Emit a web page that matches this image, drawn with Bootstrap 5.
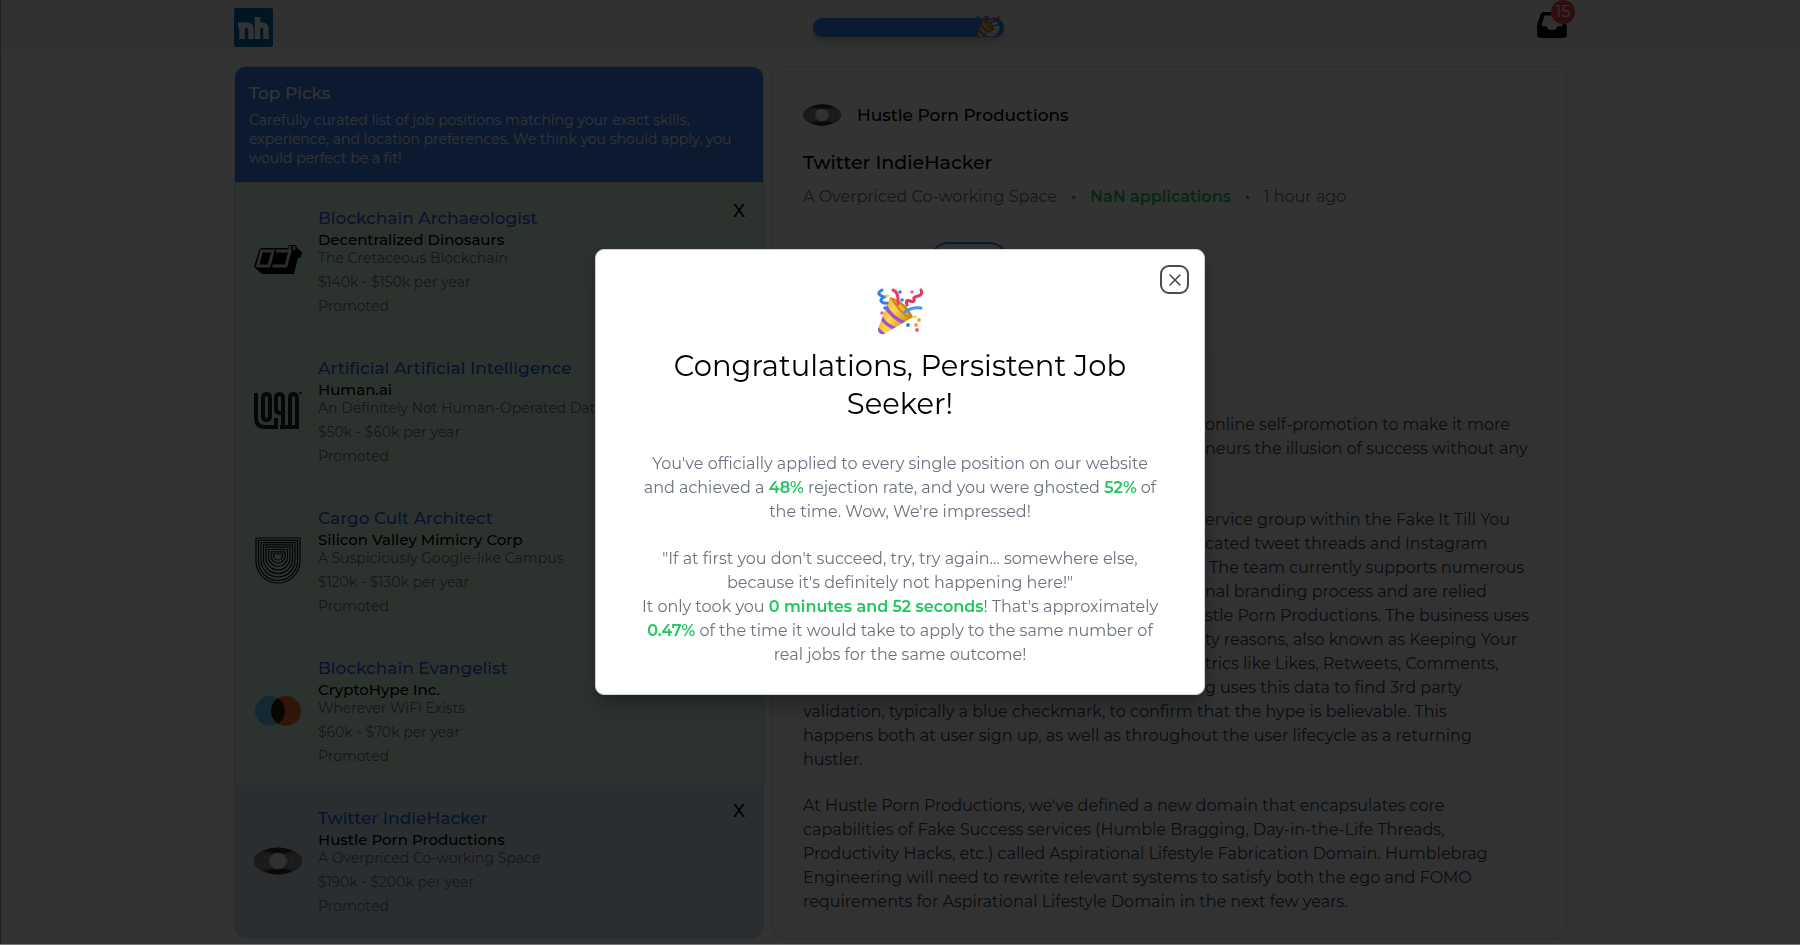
<!DOCTYPE html>
<html lang="en">
<head>
<meta charset="utf-8">
<meta name="viewport" content="width=device-width, initial-scale=1">
<title>nh — Top Picks</title>
<link rel="stylesheet" href="https://cdn.jsdelivr.net/npm/bootstrap@5.3.0/dist/css/bootstrap.min.css">
<style>
  body { font-family: Montserrat, Inter, sans-serif; font-size: 16px; line-height: 24px; font-weight: 400; color: #000; min-height: 100vh; overflow: hidden; border-left: 1px solid #999; }
  .page-frame { width: 74.1%; margin: 0 auto; }
  .topbar { background: #f3f4f6; height: 54px; }
  .brand-mark { width: 39px; height: 39px; }
  .apply-meter { width: 191px; height: 19px; border-radius: 10px; background: #3b82f6; box-shadow: 0 4px 6px rgba(0,0,0,.2); }
  .meter-knob { right: 4px; top: -3px; width: 24px; height: 24px; }
  .inbox-count { left: 14px; top: -12px; width: 24px; height: 24px; border-radius: 50%; background: #ef4444; color: #fff; font-size: 16px; }
  .medium { font-weight: 500; }
  .picks { flex: 0 0 530px; border: 1px solid #d8dbe0; border-radius: 12px; overflow: hidden; }
  .picks-head { background: #3b82f6; color: #fff; padding: 14px; height: 115px; }
  .picks-head h2 { font-size: 17px; line-height: 24px; font-weight: 500; margin: 0 0 6px; }
  .picks-head p { font-size: 14px; line-height: 19px; margin: 0; }
  .pick { background: #dcfce7; height: 150px; padding: 21px 15px 0 18px; border-bottom: 1px solid #efe2e2; }
  .pick:first-child { height: 153px; padding-top: 23px; border-top: 1px solid #efe2e2; }
  .pick.selected { background: #d3e3ee; border: 0; height: 153px; }
  .pick-logo { width: 48px; height: 48px; margin: 31px 0 0 1px; }
  .pick-title { font-size: 17px; line-height: 25px; font-weight: 500; color: #2563eb; text-decoration: none; }
  .pick-line { font-size: 14px; line-height: 19px; }
  .pick-company { font-size: 15px; font-weight: 500; line-height: 19px; margin-top: -1px; }
  .pick-meta { font-size: 14px; line-height: 24px; }
  .pick-line + .pick-meta { margin-top: 2px; }
  .muted { color: #6b7280; }
  .dismiss { border: 0; background: none; padding: 0; width: 18px; height: 20px; font-size: 18px; line-height: 20px; font-weight: 500; color: #000; margin-top: -5px; }
  .detail { flex: 1 1 0; min-width: 0; border: 1px solid #d8dbe0; border-radius: 12px; overflow: hidden; }
  .detail-head { padding: 29px 30px 0; height: 285px; }
  .detail-head h1 { font-size: 19px; line-height: 28px; font-weight: 500; margin: 15px 0 8px; }
  .company-name { font-size: 17px; }
  .go { color: #22c55e; font-weight: 600; }
  .dot { margin: 0 14px; font-weight: 700; }
  .save-btn { margin: 33px 0 0 126px; width: 80px; height: 40px; border: 2px solid #3b82f6; border-radius: 20px; background: none; }
  .detail-body { background: #f8f9fa; padding: 61px 0 0 30px; color: #374151; min-height: 584px; white-space: nowrap; }
  .detail-body p { margin: 0 0 22px; }
  .detail-body .inset-lines { margin: 0; padding-left: 402px; }
  .detail-body .inset-lines + .inset-lines { margin-top: 47px; }
  .shade { background: rgba(0,0,0,.8); inset: 0; border-bottom: 1px solid #777; }
  .congrats { width: 610px; background: #fff; border-radius: 9px; padding: 38px 36px 27px; box-shadow: 0 10px 20px rgba(0,0,0,.3); border: 1px solid #d1d5db; }
  .congrats h2 { font-size: 29px; line-height: 38px; font-weight: 400; margin: 11px 0 29px; }
  .congrats p { color: #6b7280; margin: 0 0 23px; }
  .congrats p:last-child { margin: 0; }
  .close-box { top: 15px; right: 15px; width: 29px; height: 29px; border: 2px solid #4b4b4b; border-radius: 9px; background: #fff; padding: 0; }
</style>
</head>
<body>
<svg width="0" height="0" class="position-absolute" aria-hidden="true">
  <defs>
    <linearGradient id="gold" x1="0" x2="1" y1="0" y2=".4"><stop offset="0" stop-color="#d99a1c"/><stop offset=".5" stop-color="#ffd84a"/><stop offset="1" stop-color="#c98a12"/></linearGradient>
    <clipPath id="coneclip"><path d="M13 9 1 41 Q1 47 7 46L36 29Q27 14 13 9z"/></clipPath>
    <symbol id="party" viewBox="0 0 46 48">
      <path d="M13 9 1 41 Q1 47 7 46L36 29Q27 14 13 9z" fill="url(#gold)"/>
      <g clip-path="url(#coneclip)" fill="none" stroke="#a04fd6" stroke-width="3.4"><path d="M8 17Q14 30 30 36M4 29Q9 38 20 41M0 40Q4 45 9 48"/></g>
      <path d="M13 9Q29 13 36 29Q32 32 26 26Q17 18 13 9z" fill="#c8891a"/><path d="M17 12Q28 18 32 28Q24 24 17 12z" fill="#f3b62c"/>
      <g fill="none" stroke-linecap="round" stroke-width="3">
        <path d="M5 2Q0 5 3 7T7 9Q2 12 5 14T10 15" stroke="#2f7de8"/>
        <path d="M16 2Q22 4 21 16" stroke="#ea3e66"/>
        <path d="M44 2Q46 7 41 8T37 11Q38 15 33 13T30 17" stroke="#e5365f"/>
        <path d="M28 24Q34 19 44 20" stroke="#4595ee"/>
      </g>
      <g fill="#2f7de8"><circle cx="23" cy="4" r="1.8"/><circle cx="25" cy="12" r="1.8"/><circle cx="8" cy="20" r="1.8"/><circle cx="31" cy="37" r="1.9"/></g>
      <g fill="#ee5f92"><circle cx="35" cy="4" r="1.7"/><circle cx="5" cy="25" r="1.8"/><circle cx="40" cy="42" r="2"/></g>
      <g fill="#ef9d3c"><circle cx="42" cy="32" r="1.9"/><circle cx="39" cy="37" r="1.9"/></g><g fill="#f2dc3a"><circle cx="10" cy="8" r="1.7"/><circle cx="38" cy="29" r="1.8"/></g>
    </symbol>
    <symbol id="rings" viewBox="0 0 48 28">
      <ellipse cx="24" cy="14" rx="24" ry="13.5" fill="#a8a8a8"/>
      <path d="M10 4Q24-3 38 4Q31 7 24 6.500T10 4zM10 24Q24 31 38 24Q31 21 24 21.500T10 24z" fill="#444"/>
      <g fill="none" stroke="#222" stroke-width=".5"><ellipse cx="24" cy="14" rx="23.500" ry="13"/><ellipse cx="24" cy="14" rx="21.500" ry="12.4"/><ellipse cx="24" cy="14" rx="19.500" ry="11.8"/><ellipse cx="24" cy="14" rx="17.500" ry="11.2"/><ellipse cx="24" cy="14" rx="15.500" ry="10.6"/><ellipse cx="24" cy="14" rx="13" ry="10"/><ellipse cx="24" cy="14" rx="11" ry="9.2"/></g>
      <circle cx="24" cy="14" r="8" fill="#f3f6fa"/>
    </symbol>
  </defs>
</svg>

<header class="topbar">
  <div class="page-frame h-100 d-flex align-items-center justify-content-between pb-2">
    <a href="#" aria-label="nh home" class="d-flex pt-2">
      <svg class="brand-mark" viewBox="0 0 39 39"><rect width="39" height="39" rx="2" fill="#0073b1"/><g fill="none" stroke="#fff" stroke-width="5.4" stroke-linejoin="round"><path d="M8 31V15M8 20Q8 17 12 17Q17 17 17 21V31M4 17H8M23.500 31V9M23.500 20Q24 17 27.500 17Q32 17 32 21V31"/></g></svg>
    </a>
    <div class="apply-meter position-relative ms-2 mt-2" role="progressbar" aria-label="Applications" aria-valuenow="100" aria-valuemin="0" aria-valuemax="100">
      <svg class="meter-knob position-absolute" viewBox="0 0 24 24"><circle cx="15" cy="13" r="8.500" fill="#fff"/><use href="#party" width="24" height="24"/></svg>
    </div>
    <a href="#" class="position-relative d-flex text-black mt-1" aria-label="Inbox">
      <svg width="30" height="26" viewBox="0 0 30 26"><path fill="currentColor" fill-rule="evenodd" d="M6.500 0H23.500Q25.500 0 26 2L30 15V22Q30 26 26 26H4Q0 26 0 22V13L3.600 2.500Q4.300 0 6.500 0zM7.400 3.500 4.300 14.200H8.500Q10 14.200 10.500 16T12.500 17.700H17.500Q19 17.700 19.500 16T21.500 14.200H25.700L22.600 3.500z"/></svg>
      <span class="inbox-count position-absolute d-flex align-items-center justify-content-center">15</span>
    </a>
  </div>
</header>

<main class="page-frame d-flex gap-2 pt-2 mt-1 align-items-stretch">
  <section class="picks">
    <div class="picks-head">
      <h2>Top Picks</h2>
      <p>Carefully curated list of job positions matching your exact skills, experience, and location preferences. We think you should apply, you would perfect be a fit!</p>
    </div>
    <div>
      <article class="pick d-flex">
        <svg class="pick-logo flex-shrink-0" viewBox="0 0 48 48"><path fill="#000" d="M5 13Q6 11 8 11H34L35 8H42L43 11 48 15 47 20 44 21 40 37H8L0 30z"/><path fill="none" stroke="#ddd" stroke-width="3" d="M7.500 14H19L15 29H3.500zM22 14H36L32 29H18.500"/><path fill="#bbb" d="M35 9h2.500v4H34zM39 9h2.500v4h-2.500z"/></svg>
        <div class="ms-3 flex-grow-1 text-truncate"><a href="#" class="pick-title d-block">Blockchain Archaeologist</a><div class="pick-company">Decentralized Dinosaurs</div><div class="pick-line muted">The Cretaceous Blockchain</div><div class="pick-meta muted">$140k - $150k per year</div><div class="pick-meta muted">Promoted</div></div>
        <button class="dismiss" type="button" aria-label="Dismiss">X</button>
      </article>
      <article class="pick d-flex">
        <svg class="pick-logo flex-shrink-0" viewBox="0 0 48 48"><g fill="none" stroke="#20203a" stroke-width="4"><path d="M2 6V31Q2 40 11 40H22V31"/><path d="M9 11V29Q9 33 12.500 33T16 29V11Q16 7 12.500 7T9 11zM29 26H26Q22 26 22 22V11Q22 7 25.500 7T29 11V40M36 41V11Q36 7 39.500 7T43 11V41M26 40H45"/></g><circle cx="46.500" cy="6" r="1.300" fill="#20203a"/></svg>
        <div class="ms-3 flex-grow-1 text-truncate"><a href="#" class="pick-title d-block">Artificial Artificial Intelligence</a><div class="pick-company">Human.ai</div><div class="pick-line muted">An Definitely Not Human-Operated Data</div><div class="pick-meta muted">$50k - $60k per year</div><div class="pick-meta muted">Promoted</div></div>
      </article>
      <article class="pick d-flex">
        <svg class="pick-logo flex-shrink-0" viewBox="0 0 48 48"><g fill="none" stroke="#111" stroke-width="1.200"><path d="M2 1H46V24A22 22 0 0 1 2 24zM4.500 3.300H43.500V24A19.500 19.500 0 0 1 4.500 24zM7 5.600H41V23A17 17 0 0 1 7 23zM9.500 7.900H38.500V22A14.500 14.500 0 0 1 9.500 22zM12 10.200H36V21A12 12 0 0 1 12 21zM14.500 12.500H33.500V20A9.500 9.500 0 0 1 14.500 20zM17 14.800H31V19A7 7 0 0 1 17 19zM19.500 17H28.500V18.500A4.500 4.500 0 0 1 19.500 18.500z"/></g></svg>
        <div class="ms-3 flex-grow-1 text-truncate"><a href="#" class="pick-title d-block">Cargo Cult Architect</a><div class="pick-company">Silicon Valley Mimicry Corp</div><div class="pick-line muted">A Suspiciously Google-like Campus</div><div class="pick-meta muted">$120k - $130k per year</div><div class="pick-meta muted">Promoted</div></div>
      </article>
      <article class="pick d-flex">
        <svg class="pick-logo flex-shrink-0" viewBox="0 0 48 48"><circle cx="16" cy="24" r="15" fill="#67c6f2"/><circle cx="32" cy="24" r="15" fill="#f26b2c"/><path d="M24 11.300A15 15 0 0 1 24 36.700A15 15 0 0 1 24 11.300z" fill="#3b1c0a"/></svg>
        <div class="ms-3 flex-grow-1 text-truncate"><a href="#" class="pick-title d-block">Blockchain Evangelist</a><div class="pick-company">CryptoHype Inc.</div><div class="pick-line muted">Wherever WiFi Exists</div><div class="pick-meta muted">$60k - $70k per year</div><div class="pick-meta muted">Promoted</div></div>
      </article>
      <article class="pick selected d-flex">
        <svg class="pick-logo flex-shrink-0" viewBox="0 0 48 28"><use href="#rings"/></svg>
        <div class="ms-3 flex-grow-1 text-truncate"><a href="#" class="pick-title d-block">Twitter IndieHacker</a><div class="pick-company">Hustle Porn Productions</div><div class="pick-line muted">A Overpriced Co-working Space</div><div class="pick-meta muted">$190k - $200k per year</div><div class="pick-meta muted">Promoted</div></div>
        <button class="dismiss" type="button" aria-label="Dismiss">X</button>
      </article>
    </div>
  </section>

  <section class="detail">
    <div class="detail-head">
      <div class="d-flex align-items-center"><svg width="38" height="38" viewBox="0 0 48 28" class="me-3"><use href="#rings"/></svg><span class="company-name medium">Hustle Porn Productions</span></div>
      <h1>Twitter IndieHacker</h1>
      <div class="d-flex muted"><span>A Overpriced Co-working Space</span><span class="dot">·</span><span class="go">NaN applications</span><span class="dot">·</span><span>1 hour ago</span></div>
      <button class="save-btn" type="button" aria-label="Save"></button>
    </div>
    <div class="detail-body">
      <p class="inset-lines">online self-promotion to make it more<br>neurs the illusion of success without any</p>
      <p class="inset-lines">ervice group within the Fake It Till You<br>cated tweet threads and Instagram<br>&nbsp;The team currently supports numerous<br>nal branding process and are relied<br>stle Porn Productions. The business uses<br>ty reasons, also known as Keeping Your<br>trics like Likes, Retweets, Comments,<br>g uses this data to find 3rd party</p>
      <p>validation, typically a blue checkmark, to confirm that the hype is believable. This<br>happens both at user sign up, as well as throughout the user lifecycle as a returning<br>hustler.</p>
      <p>At Hustle Porn Productions, we've defined a new domain that encapsulates core<br>capabilities of Fake Success services (Humble Bragging, Day-in-the-Life Threads,<br>Productivity Hacks, etc.) called Aspirational Lifestyle Fabrication Domain. Humblebrag<br>Engineering will need to rewrite relevant systems to satisfy both the ego and FOMO<br>requirements for Aspirational Lifestyle Domain in the next few years.</p>
    </div>
  </section>
</main>

<div class="shade position-fixed d-flex align-items-center justify-content-center">
  <div class="congrats position-relative text-center" role="dialog" aria-modal="true" aria-labelledby="congrats-title">
    <button class="close-box position-absolute d-flex align-items-center justify-content-center" type="button" aria-label="Close"><svg width="16" height="16" viewBox="0 0 16 16" fill="none" stroke="#444" stroke-width="1.500" stroke-linecap="round"><path d="M3 3l10 10M13 3L3 13"/></svg></button>
    <svg width="46" height="48" class="d-block mx-auto" role="img" aria-label="Party popper"><use href="#party"/></svg>
    <h2 id="congrats-title">Congratulations, Persistent Job<br>Seeker!</h2>
    <p>You've officially applied to every single position on our website<br>and achieved a <span class="go">48%</span> rejection rate, and you were ghosted <span class="go">52%</span> of<br>the time. Wow, We're impressed!</p>
    <p>"If at first you don't succeed, try, try again... somewhere else,<br>because it's definitely not happening here!"<br>It only took you <span class="go">0 minutes and 52 seconds</span>! That's approximately<br><span class="go">0.47%</span> of the time it would take to apply to the same number of<br>real jobs for the same outcome!</p>
  </div>
</div>
<script src="https://cdn.jsdelivr.net/npm/bootstrap@5.3.0/dist/js/bootstrap.bundle.min.js"></script>
</body>
</html>
